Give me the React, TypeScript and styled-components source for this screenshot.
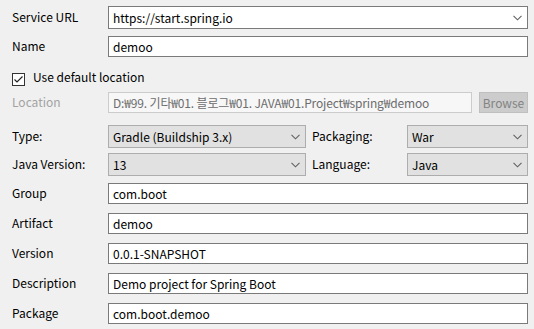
import React from "react";
import styled, { createGlobalStyle } from "styled-components";

const Global = createGlobalStyle`
  html, body { margin: 0; padding: 0; background: #f0f0f0; }
  body { font-family: "Noto Sans CJK KR", "Noto Sans", sans-serif; font-size: 12px; color: #000; }
`;

const Form = styled.div`
  width: 534px;
  height: 329px;
  box-sizing: border-box;
  padding: 6px 6px 0 12px;
  display: flex;
  flex-direction: column;
  background: #f0f0f0;
`;

const Row = styled.div<{ $mt: number; $h: number }>`
  display: flex;
  align-items: center;
  margin-top: ${(p) => p.$mt}px;
  height: ${(p) => p.$h}px;
`;

const Label = styled.div<{ $w?: number; $disabled?: boolean }>`
  width: ${(p) => p.$w ?? 96}px;
  flex: none;
  color: ${(p) => (p.$disabled ? "#a3a3a3" : "#000")};
  white-space: nowrap;
  line-height: 1;
  padding-bottom: 1px;
`;

const Field = styled.div<{ $disabled?: boolean }>`
  flex: 1;
  height: 100%;
  box-sizing: border-box;
  border: 1px solid ${(p) => (p.$disabled ? "#cccccc" : "#7a7a7a")};
  background: ${(p) => (p.$disabled ? "#f7f7f7" : "#fff")};
  color: ${(p) => (p.$disabled ? "#6d6d6d" : "#000")};
  display: flex;
  align-items: center;
  padding: 0 4px;
  white-space: nowrap;
  overflow: hidden;
  letter-spacing: ${(p) => (p.$disabled ? "-0.15px" : "0")};
`;

const Combo = styled.div<{ $gray?: boolean; $w?: number }>`
  ${(p) => (p.$w ? `width: ${p.$w}px; flex: none;` : "flex: 1;")}
  height: 100%;
  box-sizing: border-box;
  border: 1px solid ${(p) => (p.$gray ? "#adadad" : "#7a7a7a")};
  background: ${(p) => (p.$gray ? "#e1e1e1" : "#fff")};
  display: flex;
  align-items: center;
  justify-content: space-between;
  padding: 0 5px 0 4px;
  white-space: nowrap;
`;

const Button = styled.div`
  width: 49px;
  height: 100%;
  box-sizing: border-box;
  margin-left: 7px;
  border: 1px solid #bfbfbf;
  background: #cccccc;
  color: #838383;
  display: flex;
  align-items: center;
  justify-content: center;
`;

const Check = styled.div`
  width: 13px;
  height: 13px;
  box-sizing: border-box;
  border: 1px solid #333;
  background: #fff;
  display: flex;
  align-items: center;
  justify-content: center;
  margin-right: 8px;
`;

const CheckLabel = styled.span`
  line-height: 1;
  padding-bottom: 4px;
`;

const Gap = styled.div<{ $w: number }>`
  width: ${(p) => p.$w}px;
  flex: none;
`;

const Chevron = () => (
  <svg width="9" height="6" viewBox="0 0 9 6">
    <polyline points="0.5,0.8 4.5,4.8 8.5,0.8" fill="none" stroke="#606060" strokeWidth="1.1" />
  </svg>
);

export default function App() {
  return (
    <>
      <Global />
      <Form>
        <Row $mt={0} $h={23}>
          <Label>Service URL</Label>
          <Combo>
            <span>https://start.spring.io</span>
            <Chevron />
          </Combo>
        </Row>
        <Row $mt={7} $h={21}>
          <Label>Name</Label>
          <Field>demoo</Field>
        </Row>
        <Row $mt={15} $h={14}>
          <Check>
            <svg width="11" height="11" viewBox="0 0 11 11">
              <polyline points="1.5,5.5 4,8 9.5,2.5" fill="none" stroke="#222" strokeWidth="1.2" />
            </svg>
          </Check>
          <CheckLabel>Use default location</CheckLabel>
        </Row>
        <Row $mt={6} $h={21}>
          <Label $disabled>Location</Label>
          <Field $disabled>D:₩99. 기타₩01. 블로그₩01. JAVA₩01.Project₩spring₩demoo</Field>
          <Button>Browse</Button>
        </Row>
        <Row $mt={12} $h={23}>
          <Label>Type:</Label>
          <Combo $gray $w={198}>
            <span>Gradle (Buildship 3.x)</span>
            <Chevron />
          </Combo>
          <Gap $w={6} />
          <Label $w={95}>Packaging:</Label>
          <Combo $gray>
            <span>War</span>
            <Chevron />
          </Combo>
        </Row>
        <Row $mt={5} $h={23}>
          <Label>Java Version:</Label>
          <Combo $gray $w={198}>
            <span>13</span>
            <Chevron />
          </Combo>
          <Gap $w={6} />
          <Label $w={95}>Language:</Label>
          <Combo $gray>
            <span>Java</span>
            <Chevron />
          </Combo>
        </Row>
        <Row $mt={7} $h={21}>
          <Label>Group</Label>
          <Field>com.boot</Field>
        </Row>
        <Row $mt={9} $h={21}>
          <Label>Artifact</Label>
          <Field>demoo</Field>
        </Row>
        <Row $mt={9} $h={21}>
          <Label>Version</Label>
          <Field>0.0.1-SNAPSHOT</Field>
        </Row>
        <Row $mt={9} $h={21}>
          <Label>Description</Label>
          <Field>Demo project for Spring Boot</Field>
        </Row>
        <Row $mt={9} $h={21}>
          <Label>Package</Label>
          <Field>com.boot.demoo</Field>
        </Row>
      </Form>
    </>
  );
}
